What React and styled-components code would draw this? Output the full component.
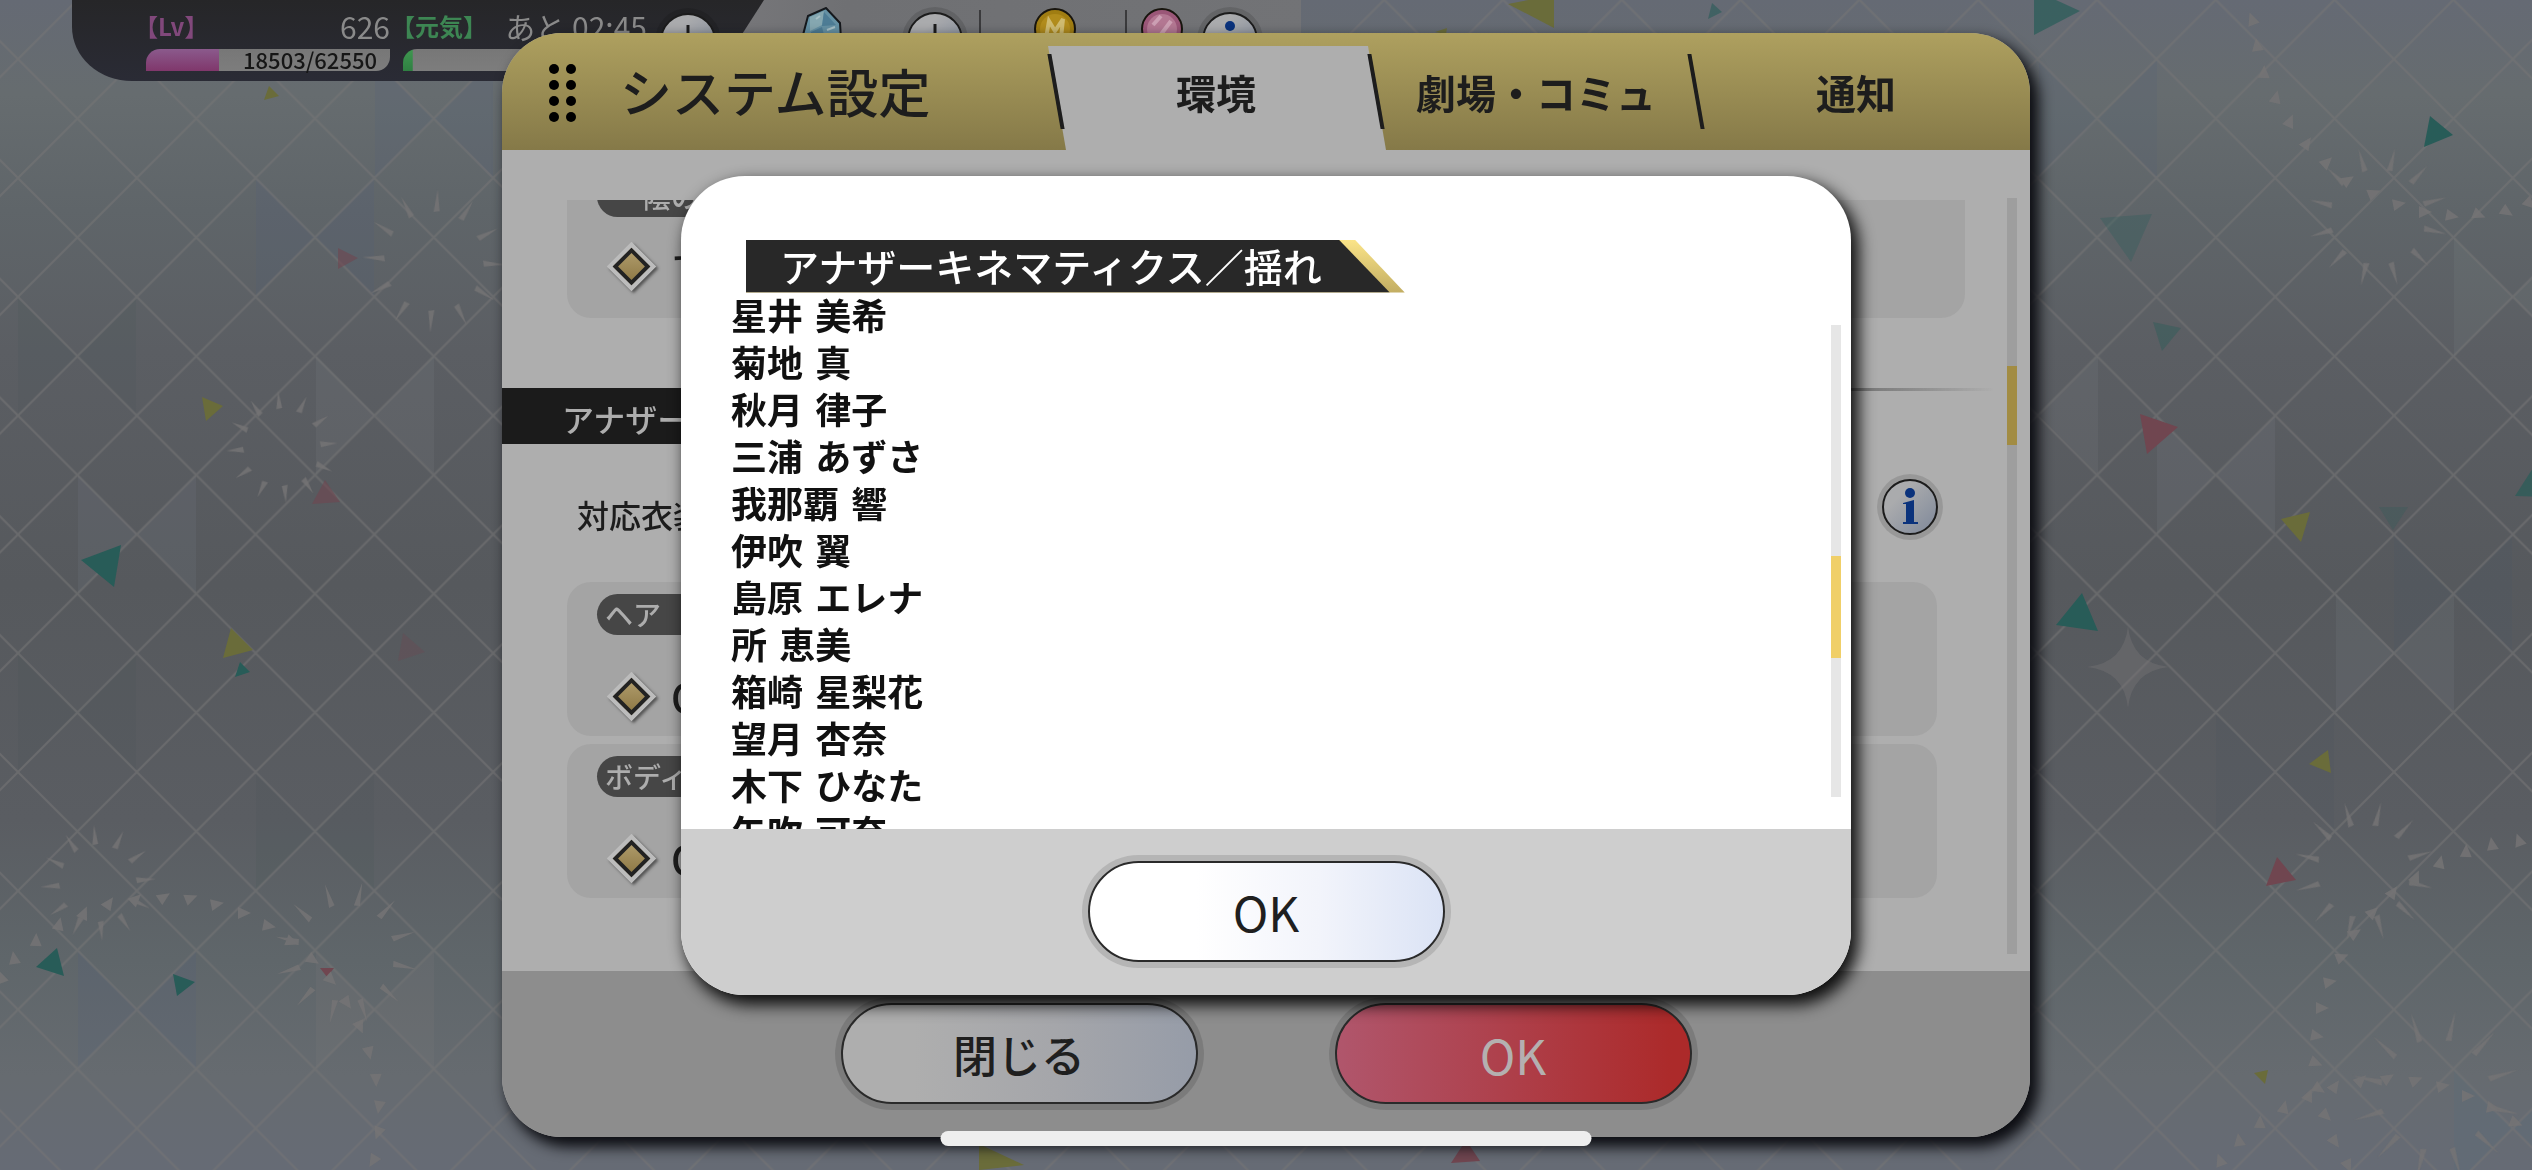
import { useState } from 'react'
import styled, { createGlobalStyle } from 'styled-components'

const tabs = ['環境', '劇場・コミュ', '通知'];

const members = [
  ['星井', '美希'],
  ['菊地', '真'],
  ['秋月', '律子'],
  ['三浦', 'あずさ'],
  ['我那覇', '響'],
  ['伊吹', '翼'],
  ['島原', 'エレナ'],
  ['所', '恵美'],
  ['箱崎', '星梨花'],
  ['望月', '杏奈'],
  ['木下', 'ひなた'],
  ['矢吹', '可奈'],
];

// Background art
const TEAL = '#285c58';
const YELLOW = '#6a6c3a';
const RED = '#704650';

const confetti = [
  [YELLOW, '269,86 279,96 264,100'],
  [RED, '338,248 358,258 338,269', 0.6],
  [YELLOW, '202,397 223,406 206,421'],
  [RED, '325,480 340,502 312,504', 0.6],
  [TEAL, '121,545 81,560 114,587'],
  [YELLOW, '231,628 253,650 223,658'],
  [TEAL, '240,662 250,672 235,677'],
  [RED, '403,633 425,652 398,661', 0.3],
  [TEAL, '57,948 36,967 64,976'],
  [TEAL, '173,974 195,982 177,996'],
  [RED, '320,968 334,968 327,977'],
  [YELLOW, '979,1144 1024,1165 979,1170'],
  [RED, '1466,1140 1480,1161 1451,1163'],
  [YELLOW, '1554,-5 1508,4 1554,28'],
  [YELLOW, '1435,32 1447,28 1446,34'],
  [TEAL, '1712,3 1722,12 1708,19', 0.6],
  [TEAL, '2034,-10 2080,11 2034,35', 0.7],
  [TEAL, '2430,116 2453,135 2424,147'],
  [TEAL, '2100,218 2152,214 2131,262', 0.3],
  [TEAL, '2153,322 2181,328 2162,351', 0.4],
  [RED, '2140,414 2178,427 2147,454'],
  [YELLOW, '2310,512 2281,519 2301,542'],
  [TEAL, '2379,507 2408,507 2393,530', 0.25],
  [TEAL, '2538,460 2515,496 2545,497', 0.7],
  [TEAL, '2082,593 2056,625 2098,631'],
  [YELLOW, '2328,750 2309,764 2331,773'],
  [RED, '2277,857 2296,880 2266,886'],
  [YELLOW, '2254,1073 2268,1070 2265,1084'],
];

const facets = [
  [137, 534, '#8088a0'],
  [315, 237, '#4a5a80'],
  [434, 119, '#4a5a80'],
  [375, 415, '#8c9490'],
  [137, 1010, '#4a5880'],
  [315, 831, '#40504f'],
  [375, 1010, '#8a8080'],
  [77, 712, '#40524f'],
  [77, 356, '#40524f'],
  [2039, 415, '#8c9490'],
  [2216, 475, '#8c90a0'],
  [2395, 653, '#8c90a0'],
  [2453, 594, '#405068'],
  [2513, 297, '#8c9490'],
  [2275, 772, '#405058'],
  [2513, 1128, '#4a6880'],
  [2098, 119, '#4a5a78'],
];

const bursts = [
  [434, 261, 49, 72, 3],
  [282, 447, 38, 56, -4],
  [98, 883, 38, 58, -4],
  [346, 953, 48, 72, 13],
  [2378, 217, 47, 71, 14],
  [2364, 871, 46, 71, 14],
  [2436, 1095, 55, 86, 13],
];

const trails = [
  [[1, 977], [14, 958], [36, 940], [59, 924], [84, 913], [109, 903], [136, 899], [164, 897], [191, 898], [217, 904], [244, 913], [269, 926], [292, 942], [313, 960], [331, 980], [347, 1003], [360, 1027], [369, 1053], [376, 1080], [379, 1107], [378, 1133], [373, 1161]],
  [[2252, 19], [2257, 45], [2264, 72], [2276, 97], [2290, 121], [2307, 143], [2327, 162], [2348, 180], [2374, 193], [2399, 204], [2425, 212], [2452, 216], [2479, 215], [2507, 212], [2530, 204]],
  [[2519, 840], [2492, 844], [2466, 851], [2440, 862], [2416, 877], [2393, 892], [2373, 912], [2355, 933], [2342, 957], [2330, 982], [2322, 1008], [2317, 1036], [2316, 1063], [2319, 1089], [2326, 1116], [2335, 1142], [2348, 1166]],
  [[2220, 1160], [2239, 1140], [2260, 1122], [2284, 1107], [2309, 1095], [2335, 1086], [2361, 1080], [2388, 1078], [2416, 1080], [2443, 1086], [2468, 1096], [2493, 1108], [2516, 1123]],
];

const rays = Array.from({ length: 12 }, (_, i) => i * 30);

function Backdrop() {
  return (
    <Scene viewBox="0 0 2532 1170" preserveAspectRatio="xMidYMid slice" aria-hidden="true">
      <defs>
        <linearGradient id="sky" x1="0" y1="0" x2="0" y2="1">
          <stop offset="0" stopColor="#656a74" />
          <stop offset="0.08" stopColor="#666c6f" />
          <stop offset="0.18" stopColor="#5f6569" />
          <stop offset="0.3" stopColor="#5b5e63" />
          <stop offset="0.5" stopColor="#56595d" />
          <stop offset="0.7" stopColor="#5a5d62" />
          <stop offset="0.82" stopColor="#5f666a" />
          <stop offset="0.92" stopColor="#666b70" />
          <stop offset="1" stopColor="#666b75" />
        </linearGradient>
        <pattern id="lattice" width="118.8" height="118.8" patternUnits="userSpaceOnUse" patternTransform="translate(18 178)">
          <path d="M0 0L118.8 118.8M118.8 0L0 118.8" stroke="#757475" strokeWidth="2" opacity="0.6" />
        </pattern>
      </defs>
      <rect width="2532" height="1170" fill="url(#sky)" />
      {facets.map(([x, y, color]) => (
        <path key={`${x}-${y}`} d={`M${x} ${y}l-59 -59v118zl59 -59v118z`} fill={color} opacity="0.12" />
      ))}
      <rect width="2532" height="1170" fill="url(#lattice)" />
      {confetti.map(([color, points, opacity]) => (
        <polygon key={points} points={points} fill={color} opacity={opacity || 1} />
      ))}
      <g fill="#757475" opacity="0.85">
        {bursts.map(([x, y, inner, outer, turn]) => (
          <g key={x} transform={`translate(${x} ${y}) rotate(${turn})`}>
            {rays.map((deg) => (
              <path key={deg} d={`M-3 ${-inner}L3 ${-inner - 1}L0 ${-outer}z`} transform={`rotate(${deg})`} />
            ))}
          </g>
        ))}
        {trails.map((trail) => trail.map(([x, y], i) => (
          <path key={`${x}-${y}`} d="M0 -7L6 6L-6 6z" transform={`translate(${x} ${y}) rotate(${i * 11 - 20})`} />
        )))}
        <path d="M2128 626Q2132 663 2169 667Q2132 671 2128 708Q2124 671 2087 667Q2124 663 2128 626z" opacity="0.5" />
      </g>
    </Scene>
  )
}

function RoundIcon({ type }) {
  return (
    <svg width="66" height="66" viewBox="0 0 66 66" aria-hidden="true">
      <defs>
        <linearGradient id="disc" x1="0" y1="0" x2="1" y2="1">
          <stop offset="0.3" stopColor="#aaabad" />
          <stop offset="1" stopColor="#7d8799" />
        </linearGradient>
      </defs>
      <circle cx="33" cy="33" r="33" fill="#000" opacity="0.12" />
      <circle cx="33" cy="33" r="27" fill="url(#disc)" stroke="#1c1c1c" strokeWidth="2" />
      {type === 'plus' ? (
        <path d="M33 17V49M17 33H49" stroke="#1c1c1c" strokeWidth="3" />
      ) : (
        <g fill="#0a327c">
          <circle cx="33" cy="19" r="5" />
          <path d="M26 29L37 26V48H41V50H26V48H29V30H26z" />
        </g>
      )}
    </svg>
  )
}

function Gem() {
  return (
    <svg width="40" height="46" viewBox="0 0 40 46" aria-hidden="true">
      <path d="M6 9L24 1L38 16L39 32L28 45H6L1 28z" fill="#6591a4" stroke="#15181c" strokeWidth="2" />
      <path d="M8 10L22 4L20 18L8 24z" fill="#85a7b0" />
      <path d="M22 5L34 18L20 19zM9 25L20 20L24 36L8 40z" fill="#4d7c95" />
      <path d="M14 12L18 9M25 23L33 20M12 29L18 27" stroke="#a6bfc5" strokeWidth="2" />
    </svg>
  )
}

function Coin({ pink }) {
  return (
    <svg width="42" height="46" viewBox="0 0 42 46" aria-hidden="true">
      <circle cx="21" cy="22" r="20" fill={pink ? '#9b5778' : '#a07d12'} stroke="#18150e" strokeWidth="2" />
      <circle cx="21" cy="22" r="15" fill={pink ? '#b37792' : '#b18c1c'} />
      {pink ? (
        <path d="M12 18L20 9M18 30L30 14" stroke="#cc9fb3" strokeWidth="4" />
      ) : (
        <path d="M12 31L15 14L21 24L29 12L27 31" fill="none" stroke="#cfbb70" strokeWidth="4" />
      )}
    </svg>
  )
}

function Hud() {
  return (
    <HudBar>
      <Status>
        <Gauge>
          <GaugeHead>
            <Tag $color="#81487b">【Lv】</Tag>
            <span>626</span>
          </GaugeHead>
          <Meter $from="#8b5a8c" $to="#80376b" $fill={30}>18503/62550</Meter>
        </Gauge>
        <Gauge>
          <GaugeHead>
            <Tag $color="#3d8653">【元気】</Tag>
            <span>あと 02:45</span>
          </GaugeHead>
          <Meter $from="#3f9850" $to="#2f7f42" $fill={4} />
        </Gauge>
        <HudButton $left={-5} aria-label="元気を回復"><RoundIcon type="plus" /></HudButton>
      </Status>
      <Wallet>
        <Gem />
        <HudButton $left={60} aria-label="ジュエルを追加"><RoundIcon type="plus" /></HudButton>
        <Divider $left={11} />
        <Coins $left={53}><Coin /></Coins>
        <Divider $left={49} />
        <Coins $left={14}><Coin pink /></Coins>
        <HudButton $left={14} aria-label="詳細"><RoundIcon type="info" /></HudButton>
      </Wallet>
    </HudBar>
  )
}

function Scrollbar({ track, thumb, offset, size }) {
  return (
    <Track $color={track}>
      <Thumb $color={thumb} style={{ height: `${size * 100}%`, top: `${offset * 100}%` }} />
    </Track>
  )
}

function App() {
  const [activeTab, setActiveTab] = useState('環境');

  return (
    <Page>
      <GlobalStyle />
      <Backdrop />
      <Hud />

      <Layer>
        <Settings>
          <Header>
            <Dots>
              {rays.slice(0, 8).map((n) => <i key={n} />)}
            </Dots>
            <Title>システム設定</Title>
            <Tabs>
              {tabs.map((tab) => (
                <Tab key={tab} $active={tab === activeTab} onClick={() => setActiveTab(tab)}>
                  <span>{tab}</span>
                </Tab>
              ))}
            </Tabs>
          </Header>

          <Body>
            <Viewport>
              <Card $first>
                <Pill $inset={46}>陰の</Pill>
                <Option $gap={24}>
                  <input type="radio" name="shadow" defaultChecked />する
                </Option>
              </Card>
              <SectionHead>
                <h2>アナザー</h2>
              </SectionHead>
              <InfoRow>
                <span>対応衣装</span>
                <HudButton aria-label="対応衣装について"><RoundIcon type="info" /></HudButton>
              </InfoRow>
              <Card>
                <Pill $inset={8}>ヘア</Pill>
                <Option $gap={36}>
                  <input type="radio" name="hair" defaultChecked />ON
                </Option>
              </Card>
              <Card>
                <Pill $inset={8}>ボディ</Pill>
                <Option $gap={36}>
                  <input type="radio" name="body" defaultChecked />ON
                </Option>
              </Card>
            </Viewport>
            <Scrollbar track="#9e9e9e" thumb="#a28c43" offset={0.222} size={0.105} />
          </Body>

          <Footer $dim>
            <Button $kind="dim">閉じる</Button>
            <Button $kind="red">OK</Button>
          </Footer>
        </Settings>
      </Layer>

      <Layer>
        <Modal role="dialog" aria-labelledby="modal-title">
          <Ribbon>
            <h2 id="modal-title">アナザーキネマティクス／揺れ</h2>
          </Ribbon>
          <ModalBody>
            <MemberList>
              {members.map(([family, given]) => (
                <li key={family}><span>{family}</span> {given}</li>
              ))}
            </MemberList>
            <Scrollbar track="#e6e6e6" thumb="#f0cf68" offset={0.49} size={0.216} />
          </ModalBody>
          <Footer>
            <Button>OK</Button>
          </Footer>
        </Modal>
      </Layer>
      <HomeIndicator />
    </Page>
  )
}

const GlobalStyle = createGlobalStyle`
  *{
    box-sizing: border-box;
    margin: 0;
    padding: 0;
  }
  body{
    font-family: "Noto Sans CJK JP", "Noto Sans", sans-serif;
    color: #1d1d1d;
    overflow: hidden;
  }
  button{
    font: inherit;
    color: inherit;
    border: none;
    background: none;
    cursor: pointer;
  }
`;

const Page = styled.div`
  position: relative;
  height: 100vh;
  overflow: hidden;
`;

const Scene = styled.svg`
  position: absolute;
  inset: 0;
  width: 100%;
  height: 100%;
`;

const HudBar = styled.div`
  position: relative;
  display: flex;
  align-items: flex-start;
  padding-left: 72px;
`;

const Status = styled.div`
  position: relative;
  z-index: 1;
  display: flex;
  gap: 13px;
  width: 692px;
  height: 81px;
  padding: 8px 0 0 74px;
  background: linear-gradient(#262628, #2a2b35);
  border-bottom-left-radius: 60px 54px;
  clip-path: polygon(0 0, 100% 0, 640px 100%, 0 100%);
`;

const Gauge = styled.div`
  width: 244px;
`;

const GaugeHead = styled.div`
  display: flex;
  justify-content: space-between;
  align-items: center;
  height: 36px;
  margin-bottom: 5px;
  font-size: 30px;
  line-height: 32px;
  color: #8a8a8a;
`;

const Tag = styled.span`
  font-size: 24px;
  font-weight: 700;
  font-feature-settings: "halt";
  color: ${({ $color }) => $color};
`;

const Meter = styled.div`
  height: 22px;
  padding-right: 13px;
  font-size: 22px;
  font-weight: 500;
  line-height: 21px;
  text-align: right;
  color: #161616;
  background:
    linear-gradient(${({ $from, $to }) => `${$from}, ${$to}`}) left / ${({ $fill }) => $fill}% 100% no-repeat,
    linear-gradient(#777, #7d7d7d);
  border-radius: 14px 0 14px 0;
`;

const Wallet = styled.div`
  display: flex;
  align-items: flex-start;
  width: 569px;
  height: 60px;
  margin-left: -32px;
  padding: 7px 0 0 70px;
  background: linear-gradient(100deg, #77777a, #6f7073 20%, #727376);
`;

const HudButton = styled.button`
  width: 66px;
  height: 66px;
  flex: none;
  margin-left: ${({ $left }) => $left || 0}px;
  line-height: 0;
`;

const Coins = styled.div`
  flex: none;
  margin-left: ${({ $left }) => $left}px;
`;

const Divider = styled.div`
  flex: none;
  width: 2px;
  height: 40px;
  margin: 3px 0 0 ${({ $left }) => $left}px;
  background: #3a3a3c;
`;

const Layer = styled.div`
  position: absolute;
  inset: 0;
  z-index: 2;
  display: flex;
  justify-content: center;
  align-items: center;
  padding: 33px 0;
`;

const Settings = styled.section`
  display: flex;
  flex-direction: column;
  width: 100%;
  max-width: 1528px;
  height: 100%;
  border-radius: 60px;
  overflow: hidden;
  background: #aeaeae;
  box-shadow: 7px 8px 14px 2px #0c0d12;
`;

const Header = styled.header`
  display: flex;
  align-items: center;
  height: 117px;
  flex: none;
  padding-left: 47px;
  background: linear-gradient(#aea05f, #857948);
`;

const Dots = styled.div`
  display: grid;
  grid-template-columns: 10px 10px;
  gap: 6px 7px;
  padding-top: 2px;
  i{
    width: 10px;
    height: 10px;
    border-radius: 50%;
    background: #000;
  }
`;

const Title = styled.h1`
  margin-left: 44px;
  padding-bottom: 2px;
  font-size: 52px;
  font-weight: 500;
  line-height: 60px;
`;

const Tabs = styled.nav`
  display: flex;
  align-self: flex-end;
  margin-left: auto;
  padding-right: 22px;
`;

const Tab = styled.button`
  position: relative;
  width: 320px;
  height: 104px;
  padding: 0 0 12px 16px;
  font-size: 40px;
  font-weight: 700;
  span{
    position: relative;
  }
  &::before{
    content: "";
    position: absolute;
    inset: 0 -18px 0 0;
    background: ${({ $active }) => ($active ? '#aeaeae' : 'none')};
    clip-path: polygon(0 0, 320px 0, 100% 100%, 18px 100%);
  }
  &::after{
    content: "";
    position: absolute;
    top: 8px;
    left: 6px;
    width: 4px;
    height: 75px;
    background: #1d1d1d;
    transform: skewX(10deg);
  }
`;

const Body = styled.div`
  display: flex;
  flex: 1;
  min-height: 0;
  padding: 48px 13px 17px 0;
`;

const Viewport = styled.div`
  flex: 1;
  margin-top: 2px;
  overflow: hidden;
`;

const Card = styled.div`
  height: 154px;
  margin: ${({ $first }) => ($first ? '-36px 42px 0 65px' : '0 70px 8px 65px')};
  padding: 12px 30px;
  border-radius: 24px;
  background: #a4a4a4;
`;

const Pill = styled.div`
  width: 300px;
  height: 41px;
  padding-left: ${({ $inset }) => $inset}px;
  border-radius: 21px;
  font-size: 28px;
  font-weight: 500;
  line-height: 41px;
  color: #adadad;
  background: #464646;
`;

const Option = styled.label`
  display: flex;
  align-items: center;
  gap: 22px;
  height: 50px;
  margin-top: ${({ $gap }) => $gap}px;
  padding-left: 17px;
  font-size: 40px;
  font-weight: 500;
  line-height: 50px;
  input{
    appearance: none;
    flex: none;
    width: 35px;
    height: 35px;
    border: 4px solid #bcbcbc;
    background: linear-gradient(135deg, #b3a070, #8a7440);
    box-shadow: inset 0 0 0 4px #222, 3px 0 3px #555;
    transform: rotate(45deg);
  }
`;

const SectionHead = styled.div`
  margin: 70px 13px 30px 0;
  background: linear-gradient(90deg, #333 80%, transparent) top / 100% 3px no-repeat;
  h2{
    width: 480px;
    height: 56px;
    padding-left: 60px;
    font-size: 32px;
    font-weight: 500;
    line-height: 60px;
    color: #adadad;
    background: #1b1b1b;
  }
`;

const InfoRow = styled.div`
  display: flex;
  justify-content: space-between;
  align-items: center;
  height: 66px;
  margin: 0 64px 42px 75px;
  font-size: 32px;
  font-weight: 500;
  span{
    padding-top: 14px;
  }
`;

const Track = styled.div`
  position: relative;
  width: 10px;
  background: ${({ $color }) => $color};
`;

const Thumb = styled.div`
  position: absolute;
  width: 100%;
  background: ${({ $color }) => $color};
`;

const Footer = styled.footer`
  display: flex;
  justify-content: center;
  gap: 137px;
  flex: none;
  height: 166px;
  padding-top: 32px;
  background: ${({ $dim }) => ($dim ? '#8d8d8d' : '#cecece')};
`;

const fills = {
  dim: '#aeaeae 20%, #a5a6aa 60%, #969ca8',
  red: '#b0566c, #ac2a2a 95%',
  light: '#fff 30%, #f2f4fb 65%, #dbe3f5',
};

const Button = styled.button`
  width: 357px;
  height: 101px;
  border: 2px solid #2a2a2a;
  border-radius: 51px;
  font-size: ${({ $kind }) => ($kind === 'dim' ? 44 : 48)}px;
  font-weight: ${({ $kind }) => ($kind === 'dim' ? 500 : 400)};
  line-height: 60px;
  color: ${({ $kind }) => ($kind === 'red' ? '#b4b0b0' : '#1f1f1f')};
  background: linear-gradient(90deg, ${({ $kind = 'light' }) => fills[$kind]});
  box-shadow: 0 0 0 6px rgba(0, 0, 0, 0.12);
`;

const Modal = styled.section`
  display: flex;
  flex-direction: column;
  width: 100%;
  max-width: 1170px;
  height: 70vh;
  padding-top: 64px;
  border-radius: 64px;
  overflow: hidden;
  background: #fff;
  box-shadow: 6px 8px 16px 2px rgba(0, 0, 0, 0.9);
`;

const Ribbon = styled.div`
  align-self: flex-start;
  margin-left: 65px;
  background: linear-gradient(#fbe488, #c2ad62);
  clip-path: polygon(0 0, calc(100% - 50px) 0, 100% 100%, 0 100%);
  h2{
    height: 53px;
    margin-right: 15px;
    padding: 0 68px 0 34px;
    font-size: 39px;
    font-weight: 500;
    line-height: 50px;
    color: #fff;
    background: #282828;
    clip-path: polygon(0 0, calc(100% - 51px) 0, 100% 100%, 0 100%);
  }
`;

const ModalBody = styled.div`
  display: flex;
  flex: 1;
  min-height: 0;
  padding-right: 10px;
  ${Track}{
    margin: 32px 0;
  }
`;

const MemberList = styled.ul`
  flex: 1;
  padding-left: 50px;
  overflow: hidden;
  list-style: none;
  li{
    height: 47px;
    font-size: 36px;
    font-weight: 700;
    line-height: 42px;
    color: #111;
  }
  span{
    margin-right: 4px;
  }
`;

const HomeIndicator = styled.div`
  position: absolute;
  z-index: 3;
  bottom: 24px;
  left: 50%;
  width: 651px;
  height: 15px;
  border-radius: 8px;
  background: #eee;
  transform: translateX(-50%);
`;

export default App
